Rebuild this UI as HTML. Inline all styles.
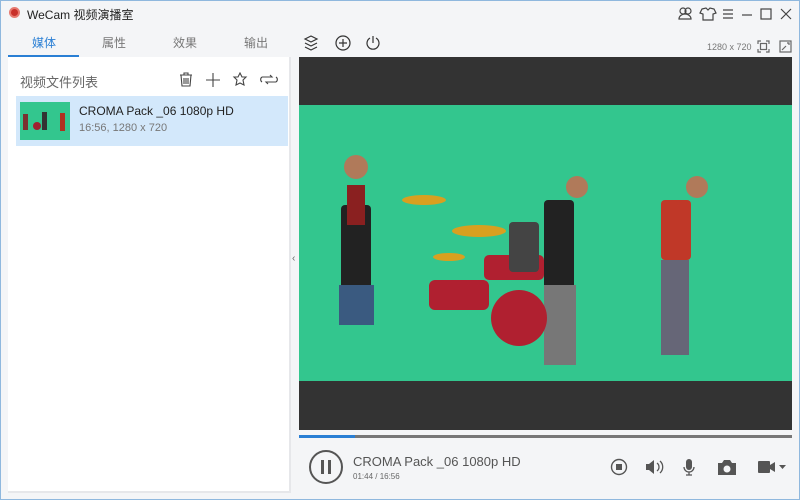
<!DOCTYPE html>
<html><head><meta charset="utf-8"><style>
*{margin:0;padding:0;box-sizing:border-box}
body{width:800px;height:500px;overflow:hidden;background:#f4f5f7;font-family:"Liberation Sans","Noto Sans CJK SC",sans-serif;position:relative;color:#333}
.win{position:absolute;inset:0;border:1px solid #8fb8de}
.a{position:absolute}
svg{position:absolute}
</style></head><body>
<div class="win"></div>
<div class="a" style="left:9px;top:7px;width:11px;height:11px;border-radius:50%;background:#c8302a;border:2px solid #e67a70"></div>
<div class="a" style="left:27px;top:6px;font-size:12px;color:#222">WeCam 视频演播室</div>
<svg style="left:678px;top:7px" width="120" height="14" fill="none" stroke="#444" stroke-width="1.2">
<circle cx="5" cy="4" r="3"/><circle cx="10" cy="4" r="3"/><path d="M1 12c0-3 3-5 6-5s6 2 6 5z"/>
<path d="M24 2l4-1 2 2 2-2 4 1 2 4-3 1v6h-10v-6l-3-1z"/>
<path d="M45 3h10M45 7h10M45 11h10"/>
<path d="M64 8h10"/>
<rect x="83" y="2" width="10" height="10"/>
<path d="M103 2l10 10M113 2l-10 10"/>
</svg>
<div class="a" style="left:32px;top:34px;font-size:12px;color:#2a7fd4">媒体</div>
<div class="a" style="left:102px;top:34px;font-size:12px;color:#777">属性</div>
<div class="a" style="left:173px;top:34px;font-size:12px;color:#777">效果</div>
<div class="a" style="left:244px;top:34px;font-size:12px;color:#777">输出</div>
<div class="a" style="left:8px;top:55px;width:71px;height:2px;background:#2a7fd4"></div>
<svg style="left:303px;top:34px" width="80" height="18" fill="none" stroke="#333" stroke-width="1.2">
<path d="M2 5l6-3 6 3-6 3z M2 9l6 3 6-3 M2 13l6 3 6-3"/>
<circle cx="40" cy="9" r="7"/><path d="M40 5v8M36 9h8"/>
<path d="M67 4a6 6 0 1 0 6 0M70 2v7"/>
</svg>
<div class="a" style="left:707px;top:42px;font-size:9px;color:#777">1280 x 720</div>
<svg style="left:757px;top:40px" width="36" height="14" fill="none" stroke="#666" stroke-width="1.2">
<path d="M1 4V1h3M9 1h3v3M12 9v3H9M4 12H1V9"/><rect x="3.5" y="3.5" width="6" height="6"/>
<rect x="23" y="1" width="11" height="11"/><path d="M25 10l4-4M30 3h2v2"/>
</svg>
<div class="a" style="left:8px;top:57px;width:283px;height:436px;background:#fff;border-right:2px solid #e6e7ea;border-bottom:2px solid #e6e7ea"></div>
<div class="a" style="left:20px;top:72px;font-size:13px;color:#666">视频文件列表</div>
<svg style="left:178px;top:72px" width="100" height="16" fill="none" stroke="#444" stroke-width="1.1">
<path d="M2 3h12M6 3V1h4v2M3 3l1 11h8l1-11M6 6v6M8 6v6M10 6v6"/>
<path d="M35 1v14M28 8h14"/>
<path d="M62 1l2 4 4 0-3 3 1 5-4-2-4 2 1-5-3-3 4 0z"/>
<path d="M84 5h10l-2-2M98 10H88l2 2M84 5a3 3 0 0 0 0 5M98 10a3 3 0 0 0 0-5"/>
</svg>
<div class="a" style="left:16px;top:96px;width:272px;height:50px;background:#d3e8fb"></div>
<div class="a" style="left:20px;top:102px;width:50px;height:38px;background:#33c68e"></div>
<svg style="left:20px;top:102px" width="50" height="38"><g fill="#7a3030"><rect x="3" y="12" width="5" height="16"/><rect x="22" y="10" width="5" height="18" fill="#333"/><rect x="40" y="11" width="5" height="18" fill="#b03020"/><ellipse cx="17" cy="24" rx="4" ry="4" fill="#a02030"/></g></svg>
<div class="a" style="left:79px;top:104px;font-size:12px;color:#222">CROMA Pack _06 1080p HD</div>
<div class="a" style="left:79px;top:122px;font-size:11px;color:#777">16:56, 1280 x 720</div>
<div class="a" style="left:292px;top:253px;font-size:10px;color:#666">‹</div>
<div class="a" style="left:299px;top:57px;width:493px;height:373px;background:#333"></div>
<div class="a" style="left:299px;top:105px;width:493px;height:276px;background:#33c68e"></div>
<svg style="left:299px;top:105px" width="493" height="276">
<g fill="#222"><rect x="42" y="100" width="30" height="120" rx="4"/><rect x="40" y="180" width="35" height="40" fill="#3a5a80"/>
<rect x="245" y="95" width="30" height="110" rx="4"/><rect x="245" y="180" width="32" height="80" fill="#777"/>
<rect x="362" y="95" width="30" height="60" fill="#c03828" rx="4"/><rect x="362" y="155" width="28" height="95" fill="#667"/></g>
<circle cx="57" cy="62" r="12" fill="#b07a5a"/><circle cx="278" cy="82" r="11" fill="#b07a5a"/><circle cx="398" cy="82" r="11" fill="#b07a5a"/>
<rect x="48" y="80" width="18" height="40" fill="#8a2020"/>
<g fill="#b02030"><ellipse cx="220" cy="213" rx="28" ry="28"/><rect x="130" y="175" width="60" height="30" rx="6"/><rect x="185" y="150" width="60" height="25" rx="5"/></g>
<g fill="#d8a020"><ellipse cx="125" cy="95" rx="22" ry="5"/><ellipse cx="180" cy="126" rx="27" ry="6"/><ellipse cx="150" cy="152" rx="16" ry="4"/></g>
<rect x="210" y="117" width="30" height="50" fill="#444" rx="4"/>
</svg>
<div class="a" style="left:299px;top:435px;width:493px;height:3px;background:#777"></div>
<div class="a" style="left:299px;top:435px;width:56px;height:3px;background:#2a7fd4"></div>
<div class="a" style="left:309px;top:450px;width:34px;height:34px;border:2px solid #555;border-radius:50%"></div>
<div class="a" style="left:321px;top:460px;width:3px;height:14px;background:#555"></div>
<div class="a" style="left:328px;top:460px;width:3px;height:14px;background:#555"></div>
<div class="a" style="left:353px;top:454px;font-size:13px;color:#555">CROMA Pack _06 1080p HD</div>
<div class="a" style="left:353px;top:472px;font-size:8px;color:#666">01:44 / 16:56</div>
<svg style="left:608px;top:456px" width="185" height="22" fill="#555" stroke="#555">
<circle cx="11" cy="11" r="7.5" fill="none" stroke-width="1.4"/><rect x="8" y="8" width="6" height="6" stroke="none"/>
<path d="M38 8h3l5-4v14l-5-4h-3z" stroke="none"/><path d="M49 7a5 5 0 0 1 0 8M52 5a8 8 0 0 1 0 12" fill="none" stroke-width="1.3"/>
<rect x="78" y="3" width="6" height="11" rx="3" stroke="none"/><path d="M76 11a5 5 0 0 0 10 0M81 16v3M78 19h6" fill="none" stroke-width="1.3"/>
<path d="M110 7h4l2-3h6l2 3h4v12h-18z" stroke="none"/><circle cx="119" cy="13" r="3.5" fill="#f4f5f7" stroke="none"/>
<rect x="150" y="5" width="12" height="12" rx="1" stroke="none"/><path d="M162 9l5-3v10l-5-3z" stroke="none"/><path d="M171 9h7l-3.5 4z" stroke="none"/>
</svg>
</body></html>
